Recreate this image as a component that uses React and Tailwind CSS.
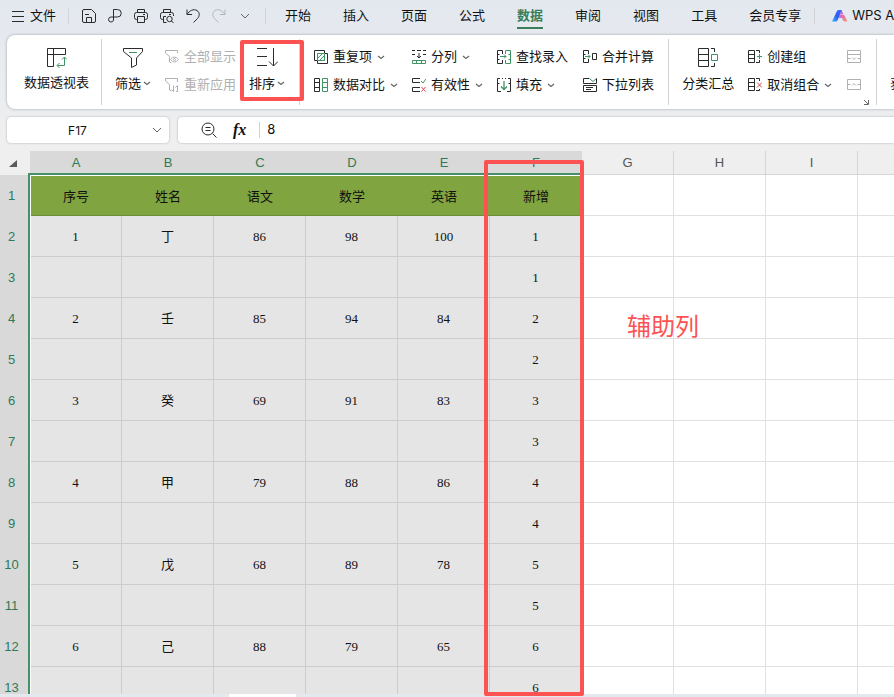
import clsx from "clsx";

const DARK = "#2b2b2b";
const GREEN = "#3f9463";
const RED = "#d9494f";

const TABS = ["开始", "插入", "页面", "公式", "数据", "审阅", "视图", "工具", "会员专享"];

const COLUMNS = ["A", "B", "C", "D", "E", "F", "G", "H", "I", "J"];
const SELECTED = 6;

const ROWS = [
  ["序号", "姓名", "语文", "数学", "英语", "新增"],
  ["1", "丁", "86", "98", "100", "1"],
  ["", "", "", "", "", "1"],
  ["2", "壬", "85", "94", "84", "2"],
  ["", "", "", "", "", "2"],
  ["3", "癸", "69", "91", "83", "3"],
  ["", "", "", "", "", "3"],
  ["4", "甲", "79", "88", "86", "4"],
  ["", "", "", "", "", "4"],
  ["5", "戊", "68", "89", "78", "5"],
  ["", "", "", "", "", "5"],
  ["6", "己", "88", "79", "65", "6"],
  ["", "", "", "", "", "6"],
];

function Icon({ size = 14, color = DARK, children }) {
  return (
    <svg
      width={size}
      height={size}
      viewBox={`0 0 ${size} ${size}`}
      fill="none"
      stroke={color}
      className="shrink-0"
      aria-hidden="true"
    >
      {children}
    </svg>
  );
}

function Chevron({ wide, color = "#666" }) {
  return wide ? (
    <svg width="10" height="6" viewBox="0 0 10 6" fill="none" stroke={color} aria-hidden="true">
      <path d="M1 1l4 4 4-4" />
    </svg>
  ) : (
    <svg width="8" height="5" viewBox="0 0 8 5" fill="none" stroke={color} strokeWidth="1.2" aria-hidden="true">
      <path d="M1 1l3 2.5L7 1" />
    </svg>
  );
}

const icons = {
  save: (
    <Icon>
      <path d="M2 .5h7.5l4 4V12q0 1.5-1.5 1.5H2Q.5 13.5.5 12V2Q.5.5 2 .5z" />
      <path d="M3 5.5h4M4.5 13V8.5h5V13" />
    </Icon>
  ),
  share: (
    <Icon>
      <path d="M5.5 11V.5h4a3.7 3.7 0 0 1 0 7.500H3.200a2.500 2.500 0 1 0 2.300 3" />
    </Icon>
  ),
  print: (
    <Icon>
      <path d="M3.5 3.5v-3h7v3M3.5 10.5h-1q-2 0-2-2v-3q0-2 2-2h9q2 0 2 2v3q0 2-2 2h-1" />
      <path d="M3.5 7.5h7v6h-7zM9 5.5h2" />
    </Icon>
  ),
  preview: (
    <Icon>
      <path d="M3.5 3.5v-3h7v3M3.5 10.5h-1q-2 0-2-2v-3q0-2 2-2h9q2 0 2 2V7M3.5 13.5v-6H6M3.5 13.5h3M9 5.5h2" />
      <circle cx="9.5" cy="10" r="2.7" />
      <path d="M11.5 12l2 2" />
    </Icon>
  ),
  undo: (
    <Icon>
      <path d="M1 .5v5h5M1 5.5C3.5 1.500 7.500-.5 11 1.500c3 2 2.800 5.500.5 8L7.500 13.500" />
    </Icon>
  ),
  redo: (
    <Icon color="#b3b7bd">
      <path d="M13 .5v5H8M13 5.5C10.500 1.500 6.500-.5 3 1.500c-3 2-2.800 5.500-.5 8l4 4" />
    </Icon>
  ),
  pivot: (
    <Icon size={21}>
      <path d="M7.5 19.5h-6v-18h18v6h-18M7.5 1.5v18" />
      <path
        d="M18.500 10.500v8h-7M16 12.500l2.500-2.500 2.500 2.500M13.500 16L11 18.500l2.500 2.500"
        stroke={GREEN}
      />
    </Icon>
  ),
  filter: (
    <Icon size={22}>
      <path d="M1.5 1.5h19v3l-6 6.5v7l-5 2.500V11l-8-6.500z" />
      <path d="M7 5.5h8" stroke={GREEN} />
    </Icon>
  ),
  showAll: (
    <Icon color="#b0b0b0">
      <path d="M12.5 3V.5H.5V3l4 3.500V12l2 1" />
      <path d="M5.5 9.500q4-5 8 0-4 5-8 0z" />
      <circle cx="9.5" cy="9.5" r="1" />
    </Icon>
  ),
  reapply: (
    <Icon color="#b0b0b0">
      <path d="M12.5 4V.5H.5V3l4 3.500V12l2 1M8.500 13.500v-6M6.500 11.500l2 2M11 13.500h1.500v-6l-2 2" />
    </Icon>
  ),
  sort: (
    <Icon size={22}>
      <path d="M1 1.5h10M1 9.5h10M1 18.5h10M17.5 1v18M13 14.500l4.500 4.500 4.500-4.500" />
    </Icon>
  ),
  duplicates: (
    <Icon>
      <path d="M10.5 3V.5H.5v10H3M10.5 3.5h3v10h-10v-3" />
      <path d="M3.5 3.5h7v7h-7zM4 8l4-4M6 10l4-4" stroke={GREEN} />
    </Icon>
  ),
  compare: (
    <Icon>
      <path d="M.5.5h5v13h-5zM.5 4.5h5M.5 9.5h5" />
      <path d="M8.5.5h5v13h-5zM8.5 4.5h5M8.5 9.5h5" stroke={GREEN} />
    </Icon>
  ),
  split: (
    <Icon>
      <path d="M0 .5h3M5 .5h4M11 .5h3M0 4.500h3M11 4.500h3M7 3v5M5 6l2 2 2-2" />
      <path d="M.5 10.500h13v3H.5zM4.500 10.500v3M9.500 10.500v3" stroke={GREEN} />
    </Icon>
  ),
  validity: (
    <Icon>
      <path d="M8 .5H.5v4H8M8 9.5H.5v4H8" />
      <path d="M9 3l2 2 3-4" stroke={GREEN} />
      <path d="M9.5 9l4 4.500M13.500 9l-4 4.500" stroke={RED} />
    </Icon>
  ),
  lookup: (
    <Icon>
      <path d="M5.5 4V.5h-5v13h5V10M.5 4.5h2M.5 9.5h2" />
      <path d="M8.5 4V.5h5v13h-5V10M11.5 4.5h2M11.5 9.5h2M3 6.500h6M7 4.500l2 2-2 2" stroke={GREEN} />
    </Icon>
  ),
  fill: (
    <Icon>
      <path d="M3 .5H.5v13H4M11 .5h2.500v13H10M5 .5h1M8 .5h1M.5 5.500h2M11.500 5.500h2" />
      <path d="M7 3v8.500M4 8.500l3 3 3-3" stroke={GREEN} strokeWidth="1.3" />
    </Icon>
  ),
  consolidate: (
    <Icon>
      <path d="M5.5 4V.5h-5v12h5V9M.5 4.5h2M.5 8.5h2M9.5 3.5h4v6h-4z" />
      <path d="M2 6.5h5M5 4.500l2 2-2 2" stroke={GREEN} />
    </Icon>
  ),
  dropdown: (
    <Icon>
      <path d="M6.500.5h-6v5h13v-5H13M.5 7.500h13v6H.5zM3 9.500h7M3 11.500h5" />
      <path d="M7 1l3 2.500L13 1" stroke={GREEN} />
    </Icon>
  ),
  subtotal: (
    <Icon size={22}>
      <path d="M1.5 1.5h10v18h-10zM1.5 7.5h10M1.5 13.5h10M14 1.5h3.500V5M14 19.500h3.500V16" />
      <path d="M14.5 7.5h6v6h-6z" stroke={GREEN} />
    </Icon>
  ),
  group: (
    <Icon>
      <path d="M.5.5h6v12h-6zM.5 4.5h6M.5 8.5h6M8 .5h3.500V3M8 12.500h3.500V10" />
      <path d="M9 6.5h5M11.5 4v5" stroke={GREEN} />
    </Icon>
  ),
  ungroup: (
    <Icon>
      <path d="M.5.5h6v12h-6zM.5 4.5h6M.5 8.5h6M8 .5h3.500V3M8 12.500h3.500V11" />
      <path d="M9 4.500l5 5M14 4.500l-5 5" stroke={RED} />
    </Icon>
  ),
  expand: (
    <Icon color="#b0b0b0">
      <path d="M.5.5h13v12H.5zM.5 4.5h13M.5 8.5h3M10.5 8.5h3M5 7.500l2 2 2-2" />
    </Icon>
  ),
  collapse: (
    <Icon color="#b0b0b0">
      <path d="M.5 1.5h13v10H.5zM.5 6.5h3M10.5 6.5h3M5 7.500l2-2 2 2" />
    </Icon>
  ),
};

function Divider({ className }) {
  return <span className={clsx("w-px shrink-0 bg-[#d0d3d7]", className)} />;
}

function BigButton({ icon, label, menu, className }) {
  return (
    <button type="button" className={clsx("mt-2 flex h-[46px] shrink-0 flex-col items-center gap-1", className)}>
      {icon}
      <span className="flex items-center gap-0.5 leading-5">
        {label}
        {menu && <Chevron />}
      </span>
    </button>
  );
}

function SmallButton({ icon, label, menu, disabled, title }) {
  return (
    <button
      type="button"
      disabled={disabled}
      aria-label={title}
      className="flex h-5 items-center gap-[5px] whitespace-nowrap disabled:text-[#b0b0b0]"
    >
      {icon}
      {label}
      {menu && <Chevron />}
    </button>
  );
}

function Stack({ children, className }) {
  return <div className={clsx("mt-2 flex shrink-0 flex-col gap-2", className)}>{children}</div>;
}

function MenuBar() {
  return (
    <header className="flex h-[31px] shrink-0 items-center overflow-hidden whitespace-nowrap pl-3">
      <button type="button" className="flex shrink-0 items-center gap-1.5">
        <svg width="12" height="12" viewBox="0 0 12 12" stroke={DARK} aria-hidden="true">
          <path d="M0 1.5h12M0 6.5h12M0 11.5h12" />
        </svg>
        文件
      </button>
      <Divider className="ml-3 h-4" />
      <div className="ml-[13px] flex shrink-0 items-center gap-3">
        <button type="button" aria-label="保存">{icons.save}</button>
        <button type="button" aria-label="输出">{icons.share}</button>
        <button type="button" aria-label="打印">{icons.print}</button>
        <button type="button" aria-label="打印预览">{icons.preview}</button>
        <button type="button" aria-label="撤销">{icons.undo}</button>
        <button type="button" aria-label="恢复">{icons.redo}</button>
        <button type="button" aria-label="更多" className="pl-0.5">
          <Chevron wide />
        </button>
      </div>
      <Divider className="ml-[15px] h-4" />
      <nav className="ml-[19px] flex shrink-0 gap-8">
        {TABS.map((tab) => (
          <button
            key={tab}
            type="button"
            className={clsx(
              "h-[27px] border-b-2 pt-px leading-5",
              tab === "数据" ? "border-[#3a7d5a] font-bold text-[#3a7d5a]" : "border-transparent"
            )}
          >
            {tab}
          </button>
        ))}
      </nav>
      <Divider className="ml-[13px] h-4" />
      <button type="button" className="ml-[17px] flex shrink-0 items-center gap-1">
        <svg width="16" height="12" viewBox="0 0 16 12" aria-hidden="true">
          <defs>
            <linearGradient id="wing" x1="0" y1="0" x2="1" y2="1">
              <stop offset="0" stopColor="#b84dff" />
              <stop offset="1" stopColor="#ff9a6a" />
            </linearGradient>
            <linearGradient id="stem" x1="0" y1="1" x2="1" y2="0">
              <stop offset="0" stopColor="#35b4ff" />
              <stop offset="0.5" stopColor="#2f5bf0" />
              <stop offset="1" stopColor="#3f6cff" />
            </linearGradient>
          </defs>
          <path d="M5 1q.5-1 1.500-1H10L5.500 10.500Q5 11.500 4 11.500H0z" fill="url(#stem)" />
          <path d="M9.500 0l2 4.500H8zM7.500 5h4q1 0 1.400 1l2.600 5.500h-3q-1 0-1.400-1L10 8H7z" fill="url(#wing)" />
        </svg>
        WPS AI
      </button>
    </header>
  );
}

function Ribbon() {
  return (
    <section className="ml-[7px] mt-1 flex h-[74px] shrink-0 overflow-hidden rounded-l-lg bg-white py-1 pl-[17px] shadow-[0_0_3px_#9aa1aa]">
      <BigButton icon={icons.pivot} label="数据透视表" />
      <Divider className="ml-3" />
      <BigButton icon={icons.filter} label="筛选" menu className="ml-[13px]" />
      <Stack className="ml-[14px]">
        <SmallButton icon={icons.showAll} label="全部显示" disabled />
        <SmallButton icon={icons.reapply} label="重新应用" disabled />
      </Stack>
      <BigButton icon={icons.sort} label="排序" menu className="ml-[13px]" />
      <Divider className="ml-[14px]" />
      <Stack className="ml-[14px]">
        <SmallButton icon={icons.duplicates} label="重复项" menu />
        <SmallButton icon={icons.compare} label="数据对比" menu />
      </Stack>
      <Stack className="ml-[14px]">
        <SmallButton icon={icons.split} label="分列" menu />
        <SmallButton icon={icons.validity} label="有效性" menu />
      </Stack>
      <Stack className="ml-[14px]">
        <SmallButton icon={icons.lookup} label="查找录入" />
        <SmallButton icon={icons.fill} label="填充" menu />
      </Stack>
      <Stack className="ml-[15px]">
        <SmallButton icon={icons.consolidate} label="合并计算" />
        <SmallButton icon={icons.dropdown} label="下拉列表" />
      </Stack>
      <Divider className="ml-[14px]" />
      <BigButton icon={icons.subtotal} label="分类汇总" className="ml-[13px]" />
      <Stack className="ml-[14px]">
        <SmallButton icon={icons.group} label="创建组" />
        <SmallButton icon={icons.ungroup} label="取消组合" menu />
      </Stack>
      <Stack className="ml-[15px]">
        <SmallButton icon={icons.expand} title="展开明细" disabled />
        <SmallButton icon={icons.collapse} title="折叠明细" disabled />
      </Stack>
      <button type="button" aria-label="分级显示设置" className="ml-[3px] shrink-0 self-end">
        <svg width="5" height="5" viewBox="0 0 5 5" fill="none" stroke="#666" aria-hidden="true">
          <path d="M0 0l4 4M4.5 0v4.500H0" />
        </svg>
      </button>
      <Divider className="ml-[7px]" />
      <BigButton icon={<Icon size={22} />} label="获取数据" className="ml-[13px]" />
    </section>
  );
}

function FormulaBar() {
  return (
    <section className="mt-2 flex h-[26px] shrink-0 gap-[9px] pl-[7px]">
      <div className="flex w-[162px] shrink-0 items-center rounded bg-white pr-[7px] shadow-[0_0_2px_#9aa1aa]">
        <input
          aria-label="名称框"
          defaultValue="F17"
          className="min-w-0 flex-1 pt-px pr-1 text-center text-xs outline-none"
        />
        <button type="button" aria-label="选择名称">
          <Chevron wide />
        </button>
      </div>
      <div className="flex min-w-0 flex-1 items-center rounded-l bg-white pl-[23px] shadow-[0_0_2px_#9aa1aa]">
        <button type="button" aria-label="查看">
          <Icon size={16}>
            <circle cx="7" cy="7" r="6" />
            <path d="M4.5 5.5h5M4.5 8.5h5M11.5 11.500l4 4" />
          </Icon>
        </button>
        <button
          type="button"
          aria-label="插入函数"
          className="ml-4 font-['Liberation_Serif',serif] text-base font-bold italic leading-5"
        >
          fx
        </button>
        <Divider className="ml-[13px] h-4" />
        <input aria-label="编辑栏" defaultValue="8" className="ml-[7px] min-w-0 flex-1 outline-none" />
      </div>
    </section>
  );
}

function Sheet() {
  return (
    <main className="relative mt-2 min-h-0 flex-1 overflow-hidden bg-white">
      <table className="w-[950px] table-fixed border-separate border-spacing-0 text-center">
        <colgroup>
          <col className="w-[30px]" />
          {COLUMNS.map((name) => (
            <col key={name} className="w-[92px]" />
          ))}
        </colgroup>
        <thead className="font-['Liberation_Sans',sans-serif] leading-5">
          <tr className="h-6">
            <th className="bg-[#efefef] p-0">
              <svg width="8" height="7" viewBox="0 0 8 7" className="ml-[9px]" aria-label="全选">
                <path d="M8 0v7H0z" fill="#5a5a5a" />
              </svg>
            </th>
            {COLUMNS.map((name, i) => (
              <th
                key={name}
                scope="col"
                className={clsx(
                  "border-b p-0 font-normal",
                  i < SELECTED
                    ? "border-[#d9d9d9] bg-[#d9d9d9] text-[#2f7a55]"
                    : "border-r border-[#d5d5d5] bg-[#efefef] text-[#555]"
                )}
              >
                {name}
              </th>
            ))}
          </tr>
        </thead>
        <tbody className="font-['Liberation_Serif','Noto_Sans_CJK_SC',serif] leading-5">
          {ROWS.map((row, r) => (
            <tr key={r} className="h-[41px]">
              <th
                scope="row"
                className="bg-[#d9d9d9] p-0 pr-[7px] font-['Liberation_Sans',sans-serif] font-normal text-[#2f7a55]"
              >
                {r + 1}
              </th>
              {COLUMNS.map((name, c) => (
                <td
                  key={name}
                  className={clsx(
                    "p-0",
                    c >= SELECTED && "border-b border-r border-[#e0e0e0]",
                    c < SELECTED && r === 0 && "border-b border-[#6e8c3a] bg-[#7fa440] pt-1",
                    c < SELECTED && r > 0 && "border-b border-r border-[#cdcdcd] bg-[#e5e5e5] pt-px"
                  )}
                >
                  {row[c]}
                </td>
              ))}
            </tr>
          ))}
        </tbody>
      </table>
      {/* selection outline for A:F */}
      <div className="pointer-events-none absolute -bottom-2 left-7 top-[22px] w-[555px] border-2 border-[#469067]">
        <div className="h-full border-l border-t border-white" />
      </div>
      <p className="absolute left-[627px] top-[158px] text-2xl leading-9 text-[#fb5252]">辅助列</p>
    </main>
  );
}

export default function App() {
  return (
    <div className="relative flex h-screen flex-col overflow-hidden bg-linear-to-b from-[#e3e8ef] to-[#efefef] to-20% font-['Inter','Noto_Sans_CJK_SC',sans-serif] text-[13px] text-[#111]">
      <MenuBar />
      <Ribbon />
      <FormulaBar />
      <Sheet />
      <footer className="flex h-[3px] shrink-0 bg-[#e4e8ef] pl-[229px]">
        <div className="w-[67px] bg-white" />
      </footer>
      {/* red callouts: sort button and helper column */}
      <div className="pointer-events-none absolute left-60 top-10 h-[61px] w-16 rounded-xs border-4 border-[#fd5252]" />
      <div className="pointer-events-none absolute bottom-px left-[484px] top-40 w-[100px] rounded-xs border-4 border-[#fd5252]" />
    </div>
  );
}
